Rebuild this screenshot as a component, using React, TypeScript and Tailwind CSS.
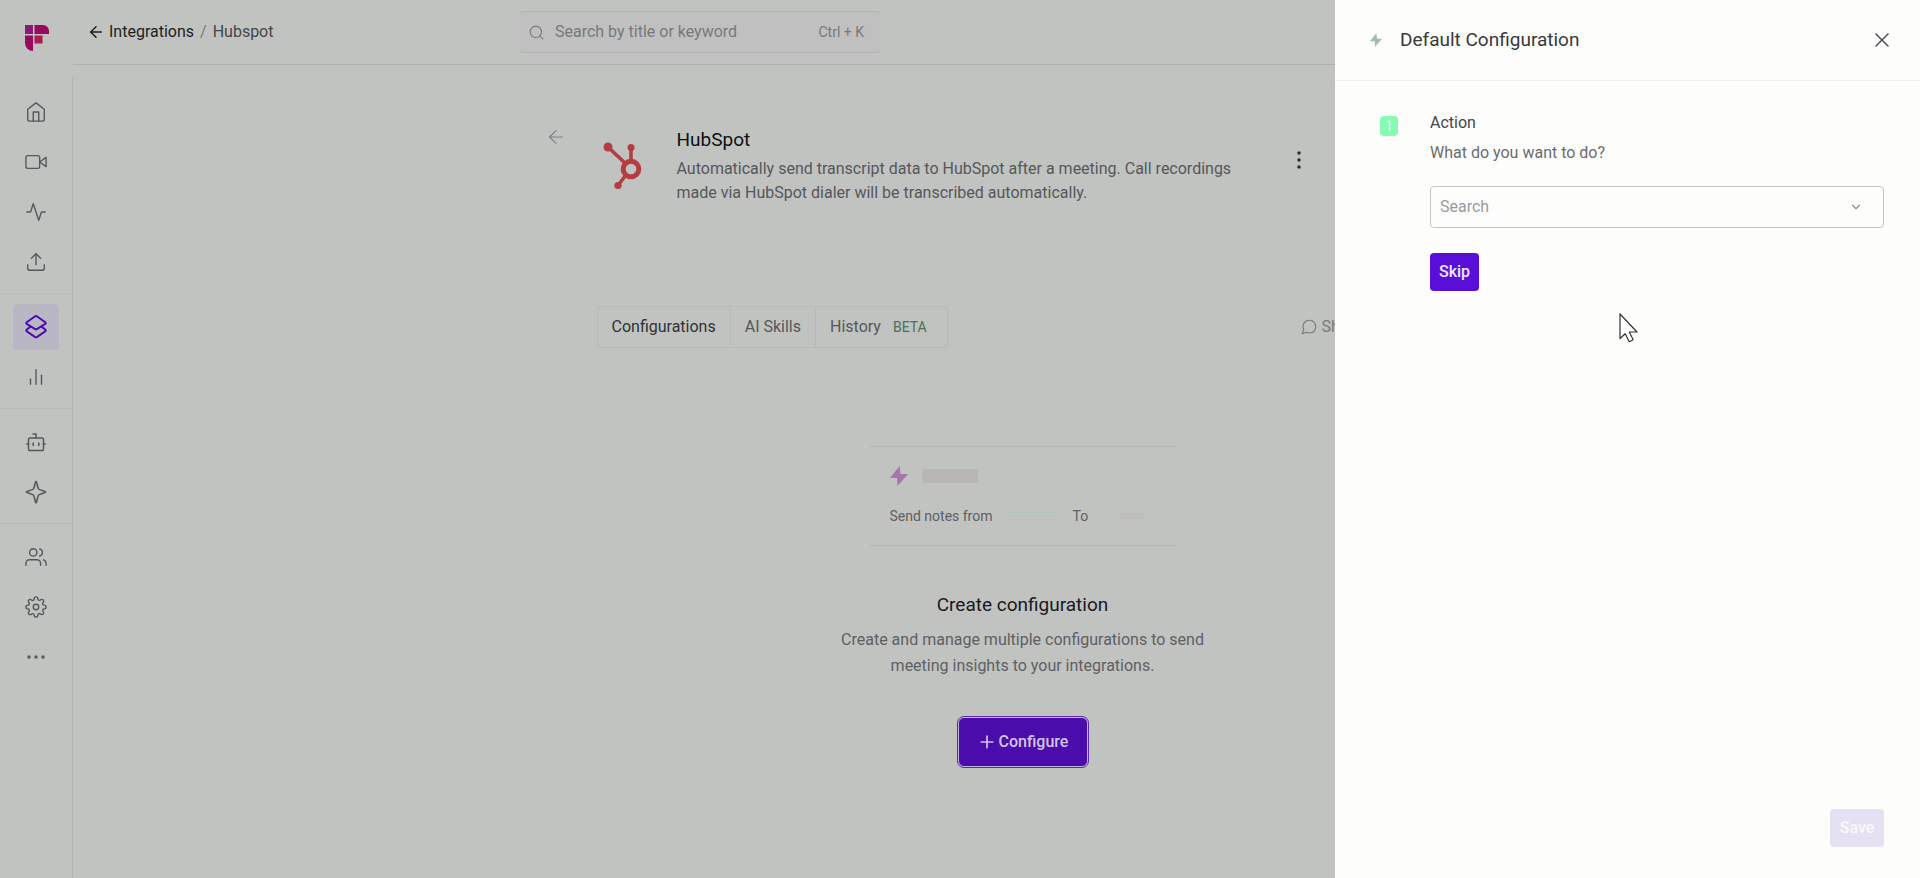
import React from 'react';
import {
  FiActivity,
  FiArrowLeft,
  FiBarChart2,
  FiChevronDown,
  FiHome,
  FiMessageCircle,
  FiMoreVertical,
  FiPlus,
  FiSearch,
  FiSettings,
  FiUpload,
  FiUsers,
  FiVideo,
  FiX,
} from 'react-icons/fi';

const LogoIcon: React.FC = () => (
  <svg width="24" height="26" viewBox="0 0 24 26">
    <rect x="0" y="0" width="8" height="9" fill="#8a1a74" />
    <path d="M9.500 0H18a6 6 0 0 1 6 6v3H9.500z" fill="#970a5c" />
    <path d="M0 10.500h8V26a8 8 0 0 1-8-8z" fill="#970a5c" />
    <rect x="9.500" y="10.500" width="8" height="8" fill="#ab1a55" />
  </svg>
);

const LayersIcon: React.FC = () => (
  <svg width="22" height="24" viewBox="0 0 22 24" fill="none" stroke="currentColor" strokeWidth="2" strokeLinejoin="round" strokeLinecap="round">
    <path d="M9.800 1.500 1.700 7.200a1 1 0 0 0 0 1.600l8.100 5.100a2.200 2.200 0 0 0 2.400 0l8.100-5.100a1 1 0 0 0 0-1.600l-8.100-5.700a2.200 2.200 0 0 0-2.400 0z" />
    <path d="m5 12-3.300 2.600a1 1 0 0 0 0 1.600l8.100 5.700a2.200 2.200 0 0 0 2.400 0l8.100-5.700a1 1 0 0 0 0-1.600L17 12" />
  </svg>
);

const BotIcon: React.FC = () => (
  <svg width="20" height="20" viewBox="0 0 20 20" fill="none" stroke="currentColor" strokeWidth="1.500" strokeLinecap="round" strokeLinejoin="round">
    <rect x="2.500" y="6" width="15" height="12.500" rx="1.800" />
    <path d="M10 6V2H7M.8 12h1.700M17.500 12h1.700M7.200 11v2.500M12.800 11v2.500" />
  </svg>
);

const SparkleIcon: React.FC = () => (
  <svg width="22" height="24" viewBox="0 0 22 24" fill="none" stroke="currentColor" strokeWidth="1.600" strokeLinejoin="round">
    <path d="M11 1.200c.9 0 1.300 5.800 2.500 7.700 1.100 1.600 7.300 2.200 7.300 3.100s-6.200 1.500-7.300 3.100c-1.200 1.900-1.600 7.700-2.500 7.700s-1.300-5.800-2.500-7.700C7.400 13.500 1.200 12.900 1.200 12s6.200-1.500 7.300-3.100C9.700 7 10.100 1.200 11 1.200z" />
  </svg>
);

const DotsIcon: React.FC = () => (
  <svg width="18" height="4" viewBox="0 0 18 4" fill="currentColor">
    <circle cx="2" cy="2" r="1.700" />
    <circle cx="9" cy="2" r="1.700" />
    <circle cx="16" cy="2" r="1.700" />
  </svg>
);

const BoltIcon: React.FC<{ className: string }> = ({ className }) => (
  <svg className={className} viewBox="0 0 18 20" fill="currentColor">
    <path d="M9.500 0 0 12h7l.5 8L18 8h-7.500z" />
  </svg>
);

const HubSpotIcon: React.FC = () => (
  <svg width="40" height="48" viewBox="0 0 40 48" fill="none" stroke="#b43c43" className="shrink-0">
    <circle cx="28" cy="27" r="7.800" strokeWidth="5" />
    <path d="M28 19V7M22 21 6 6M23 33l-7 9" strokeWidth="3.600" />
    <circle cx="5" cy="5" r="4.500" fill="#b43c43" stroke="none" />
    <circle cx="28" cy="5.500" r="3.500" fill="#b43c43" stroke="none" />
    <circle cx="15" cy="43.500" r="3.600" fill="#b43c43" stroke="none" />
  </svg>
);

const navGroups = [
  [
    { label: 'Home', icon: <FiHome size={22} strokeWidth={1.5} /> },
    { label: 'Meetings', icon: <FiVideo size={22} strokeWidth={1.5} /> },
    { label: 'Status', icon: <FiActivity size={22} strokeWidth={1.5} /> },
    { label: 'Uploads', icon: <FiUpload size={22} strokeWidth={1.5} /> },
  ],
  [
    { label: 'Integrations', icon: <LayersIcon />, active: true },
    { label: 'Analytics', icon: <FiBarChart2 size={22} strokeWidth={1.5} /> },
  ],
  [
    { label: 'Bots', icon: <BotIcon /> },
    { label: 'AI Apps', icon: <SparkleIcon /> },
  ],
  [
    { label: 'Team', icon: <FiUsers size={22} strokeWidth={1.5} /> },
    { label: 'Settings', icon: <FiSettings size={22} strokeWidth={1.5} /> },
    { label: 'More', icon: <DotsIcon /> },
  ],
];

const Sidebar: React.FC = () => (
  <aside className="flex w-[73px] shrink-0 flex-col">
    <div className="flex h-[76px] items-center justify-center">
      <LogoIcon />
    </div>
    <nav className="flex-1 border-r border-[#b3b5b3] pt-[3px]">
      {navGroups.map((group, i) => (
        <div key={i} className="flex flex-col items-center gap-1 border-b border-[#b9bab9] pt-2.5 pb-2 last:border-b-0">
          {group.map((item) => (
            <button
              key={item.label}
              aria-label={item.label}
              className={
                'active' in item
                  ? 'flex size-[46px] items-center justify-center rounded bg-[#bab7c4] text-[#4a0cb0]'
                  : 'flex size-[46px] items-center justify-center rounded text-[#55575b]'
              }
            >
              {item.icon}
            </button>
          ))}
        </div>
      ))}
    </nav>
  </aside>
);

const TopBar: React.FC = () => (
  <header className="flex h-[65px] items-center border-b border-[#b0b2af] pl-3.5">
    <div className="flex w-[433px] items-center text-base">
      <a href="#" className="flex items-center gap-1 text-[#1d1e24]">
        <FiArrowLeft size={18} />
        Integrations
      </a>
      <span className="px-1.5 text-[#77797b]">/</span>
      <span className="text-[#44464b]">Hubspot</span>
    </div>
    <label className="flex h-[42px] w-[360px] items-center gap-2.5 rounded border-y border-[#b3b4b3] bg-[#c0c0c0] px-2 text-[#77787c]">
      <FiSearch size={17} strokeWidth={1.5} className="shrink-0" />
      <input
        type="text"
        placeholder="Search by title or keyword"
        className="min-w-0 flex-1 bg-transparent text-base outline-none placeholder:text-[#77787c]"
      />
      <span className="pr-2 text-sm">Ctrl + K</span>
    </label>
  </header>
);

const EmptyState: React.FC = () => (
  <div className="mt-[98px] flex flex-col items-center text-center">
    <div className="h-[100px] w-[306px] border-y border-[#b6b6b4] px-5 pt-[19px] text-left">
      <div className="flex items-center gap-3.5">
        <BoltIcon className="h-5 w-[18px] text-[#a874ac]" />
        <span className="h-3.5 w-14 bg-[#b9b7b5]" />
      </div>
      <div className="mt-5 flex items-center text-sm text-[#5e6064]">
        <span>Send notes from</span>
        <span className="mx-4 h-2 w-12 border-y border-dotted border-[#a9c4b4]" />
        <span>To</span>
        <span className="ml-8 h-1.5 w-6 bg-[#bdbdbb]" />
      </div>
    </div>
    <h2 className="mt-[45px] text-[19px] leading-7 text-[#18191f]">Create configuration</h2>
    <p className="mt-2 w-[400px] text-base leading-[26px] text-[#5e6064]">
      Create and manage multiple configurations to send meeting insights to your integrations.
    </p>
    <button className="mt-[38px] flex h-[50px] w-[130px] items-center justify-center gap-0.5 rounded-md border border-[#c1b4dd] bg-[#4a0caa] text-base font-medium text-[#d3c4ea] outline outline-[#5a2aa8]">
      <FiPlus size={20} />
      Configure
    </button>
  </div>
);

const Integration: React.FC = () => (
  <section className="mx-auto flex max-w-[904px] pt-[61px]">
    <a href="#" aria-label="Back" className="h-6 w-[52px] shrink-0 text-[#7e8085]">
      <FiArrowLeft size={22} strokeWidth={1.2} />
    </a>
    <div className="min-w-0 flex-1">
      <div className="flex items-start pl-1.5">
        <div className="mt-4">
          <HubSpotIcon />
        </div>
        <div className="ml-[34px] w-[590px]">
          <h1 className="text-[19px] leading-7 text-[#0e0f14]">HubSpot</h1>
          <p className="mt-[3px] text-base leading-6 text-[#55575b]">
            Automatically send transcript data to HubSpot after a meeting. Call recordings made via HubSpot dialer will be transcribed automatically.
          </p>
        </div>
        <button aria-label="More options" className="mt-[22px] ml-5 text-[#26272b]">
          <FiMoreVertical size={24} strokeWidth={1.5} />
        </button>
      </div>

      <div className="mt-[101px] flex items-center justify-between">
        <div className="flex h-[42px] items-stretch rounded border border-[#b8b9b8] text-base text-[#55575b]">
          <button className="px-3.5 text-[#303238]">Configurations</button>
          <button className="border-x border-[#b8b9b8] px-3.5">AI Skills</button>
          <button className="flex items-center gap-3 pr-5 pl-3.5">
            History
            <span className="text-sm text-[#47715a]">BETA</span>
          </button>
        </div>
        <button className="flex w-[149px] items-center gap-1 text-base text-[#77797b]">
          <FiMessageCircle size={18} strokeWidth={1.5} />
          Share feedback
        </button>
      </div>

      <EmptyState />
    </div>
  </section>
);

const Drawer: React.FC = () => (
  <div role="dialog" aria-label="Default Configuration" className="fixed inset-y-0 right-0 flex w-[585px] flex-col bg-[#fdfefc]">
    <div className="flex h-[81px] items-center border-b border-[#f0f1ee] pr-[26px] pl-[35px]">
      <BoltIcon className="h-3.5 w-3 text-[#a4bda9]" />
      <h2 className="ml-[18px] flex-1 text-[19px] text-[#383840]">Default Configuration</h2>
      <button aria-label="Close" className="text-[#4c4d52]">
        <FiX size={24} strokeWidth={1.5} />
      </button>
    </div>

    <div className="flex flex-1 gap-8 pt-[30px] pr-9 pl-[45px]">
      <span className="mt-[5px] flex h-5 w-[18px] items-center justify-center rounded bg-[#86fbb2] text-sm text-[#dfffea]">1</span>
      <div className="flex-1">
        <h3 className="text-base leading-6 text-[#44454c]">Action</h3>
        <label htmlFor="action" className="mt-1.5 block text-base leading-6 text-[#6a6b70]">
          What do you want to do?
        </label>
        <div className="relative mt-[21px]">
          <select id="action" className="h-[42px] w-full appearance-none rounded border border-[#c4c5c6] bg-transparent px-[9px] text-base text-[#9a9b9f]">
            <option>Search</option>
          </select>
          <FiChevronDown size={14} className="pointer-events-none absolute top-3.5 right-[21px] text-[#8c8d91]" />
        </div>
        <button className="mt-[25px] h-[38px] rounded bg-[#5a0fd8] px-[9px] text-base font-medium text-[#f1e9fd]">Skip</button>
      </div>
    </div>

    <div className="flex justify-end pr-9 pb-[31px]">
      <button disabled className="h-[38px] w-[54px] rounded bg-[#e5e0f2] text-base font-medium text-[#faf9fd]">
        Save
      </button>
    </div>

    {/* Mouse pointer */}
    <svg width="20" height="30" viewBox="0 0 20 30" className="absolute top-[313px] left-[284px]" fill="#fff" stroke="#333" strokeWidth="1.200" strokeLinejoin="round">
      <path d="M1 1v24.500l5.200-4.800 4 8 4-2-3.900-7.700H18z" />
    </svg>
  </div>
);

const App: React.FC = () => {
  return (
    <div className="flex min-h-screen bg-[#c1c3c0] font-['Roboto',sans-serif]">
      <Sidebar />
      <main className="min-w-0 flex-1">
        <TopBar />
        <Integration />
      </main>
      <Drawer />
    </div>
  );
};

export default App;
